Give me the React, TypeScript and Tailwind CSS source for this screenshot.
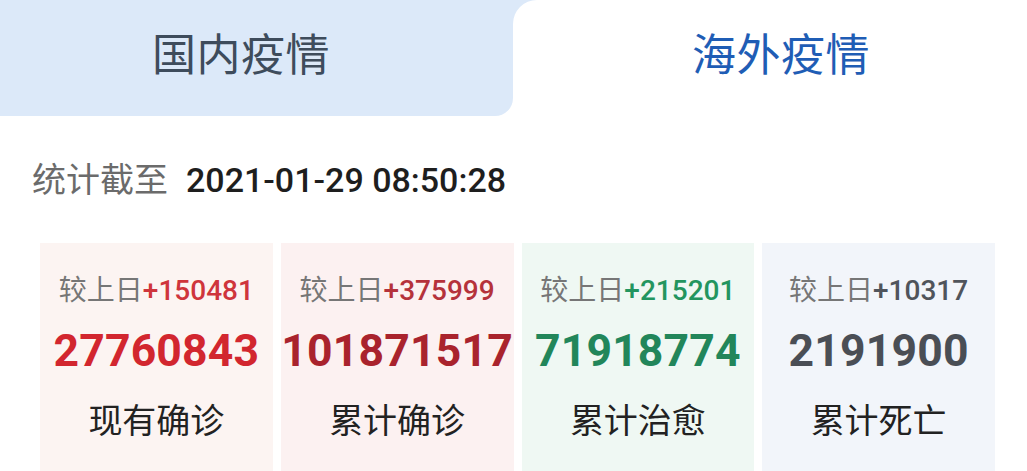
const FONT = "font-['Roboto','Noto_Sans_CJK_SC',sans-serif]";

interface Stat {
  label: string;
  delta: string;
  value: string;
  bg: string;
  deltaColor: string;
  valueColor: string;
}

const STATS: Stat[] = [
  { label: '现有确诊', delta: '+150481', value: '27760843', bg: 'bg-[#fcf4f2]', deltaColor: 'text-[#cf353c]', valueColor: 'text-[#d2262f]' },
  { label: '累计确诊', delta: '+375999', value: '101871517', bg: 'bg-[#fcf1f1]', deltaColor: 'text-[#b5323b]', valueColor: 'text-[#a9232d]' },
  { label: '累计治愈', delta: '+215201', value: '71918774', bg: 'bg-[#eff8f3]', deltaColor: 'text-[#23955f]', valueColor: 'text-[#22865a]' },
  { label: '累计死亡', delta: '+10317', value: '2191900', bg: 'bg-[#f2f5fa]', deltaColor: 'text-[#50545b]', valueColor: 'text-[#4a4e55]' },
];

function StatCard({ stat }: { stat: Stat }) {
  return (
    <div className={`flex h-[240px] flex-col items-center ${stat.bg}`}>
      <p className="mt-[32px] whitespace-nowrap text-[28px] leading-[32px] text-[#767676]">
        较上日<span className={`font-medium ${stat.deltaColor}`}>{stat.delta}</span>
      </p>
      <p className={`mt-[16px] whitespace-nowrap text-[44.5px] font-bold leading-[56px] tracking-[0.2px] ${stat.valueColor}`}>
        {stat.value}
      </p>
      <p className="mt-[22px] whitespace-nowrap text-[34px] leading-[40px] text-[#222]">{stat.label}</p>
    </div>
  );
}

export default function App() {
  return (
    <div className={`h-[471px] w-[1027px] overflow-hidden bg-white ${FONT}`}>
      {/* Tabs */}
      <div className="flex h-[116px]">
        <div className="flex w-[513px] items-center rounded-br-[18px] bg-[#dce9f9] pb-[4px] pl-[152px]">
          <span className="text-[44px] leading-none tracking-[0.5px] text-[#3e4c5c]">国内疫情</span>
        </div>
        <div className="flex-1 bg-[#dce9f9]">
          <div className="flex h-full items-center rounded-tl-[24px] bg-white pb-[4px] pl-[179px]">
            <span className="text-[44px] leading-none tracking-[0.5px] text-[#1f5db5]">海外疫情</span>
          </div>
        </div>
      </div>

      {/* Update time */}
      <div className="flex h-[127px] items-center pl-[32px]">
        <span className="text-[34px] leading-none text-[#6b6b6b]">统计截至</span>
        <span className="ml-[18px] text-[34px] font-medium leading-none text-[#1e1e1e]">2021-01-29 08:50:28</span>
      </div>

      {/* Stats */}
      <div className="grid grid-cols-4 gap-[8px] pl-[40px] pr-[32px]">
        {STATS.map((s) => (
          <StatCard key={s.label} stat={s} />
        ))}
      </div>
    </div>
  );
}
